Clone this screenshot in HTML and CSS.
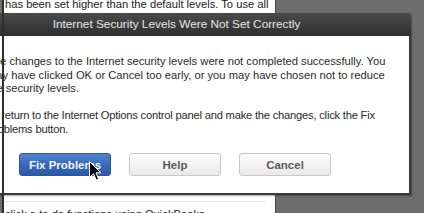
FILE: index.html
```html
<!DOCTYPE html>
<html>
<head>
<meta charset="utf-8">
<link rel="stylesheet" href="styles.css">
</head>
<body>
<div class="desktop">
  <div class="bgwin">
    <div class="bg-top">
      <p class="bg-line">has been set higher than the default levels. To use all</p>
      <p class="bg-line">security features, reset the security levels to their default</p>
    </div>
    <div class="bg-bottom">
      <div class="bg-rule"></div>
      <p class="bg-line">click a to do functions using QuickBooks</p>
    </div>
  </div>
  <div class="edge-line"></div>
  <div class="dialog">
    <div class="titlebar">Internet Security Levels Were Not Set Correctly</div>
    <div class="dialog-body">
      <p class="msg">The changes to the Internet security levels were not completed successfully. You may have clicked OK or Cancel too early, or you may have chosen not to reduce the security levels.</p>
      <p class="msg msg-tight">To return to the Internet Options control panel and make the changes, click the Fix Problems button.</p>
      <div class="buttons">
        <button class="btn btn-primary">Fix Problems</button>
        <button class="btn">Help</button>
        <button class="btn">Cancel</button>
      </div>
    </div>
  </div>
  <svg class="cursor" width="13" height="20" viewBox="0 0 13 20">
    <path d="M0.5 0.5 V16.5 L4.5 12.8 L7.2 19 L9.6 18 L7 11.8 H12 Z" fill="#000" stroke="#fff" stroke-width="1" stroke-linejoin="miter"/>
  </svg>
</div>
</body>
</html>
```

FILE: styles.css
```css
html, body {
  margin: 0;
  padding: 0;
}
body {
  width: 424px;
  height: 213px;
  overflow: hidden;
  background: #6e6e6e;
  font-family: "Liberation Sans", Arial, sans-serif;
}
.desktop {
  position: relative;
  width: 424px;
  height: 213px;
  overflow: hidden;
}
.bgwin {
  position: absolute;
  left: 3px;
  top: -10px;
  width: 272px;
  height: 240px;
  background: #fff;
  border-right: 1px solid #4a4a4a;
  display: flex;
  flex-direction: column;
  justify-content: space-between;
}
.bg-top {
  padding: 7px 0 0 2px;
}
.bg-bottom {
  padding: 0 0 0 2px;
  height: 35px;
}
.bg-line {
  margin: 0;
  font-size: 11.2px;
  line-height: 14px;
  color: #222;
  white-space: nowrap;
}
.bg-rule {
  height: 1px;
  background: #e2e2e2;
  margin: 6px 10px 5px 0;
}
.edge-line {
  position: absolute;
  left: 2px;
  top: 0;
  width: 2px;
  height: 213px;
  background: #2e2e2e;
  z-index: 3;
}
.dialog {
  position: absolute;
  left: -58px;
  top: 13px;
  width: 469px;
  z-index: 2;
  box-shadow: 1px 1px 2px rgba(0,0,0,0.35);
  border-radius: 3px 3px 0 0;
}
.titlebar {
  height: 23px;
  line-height: 23px;
  text-align: center;
  color: #e6e6e6;
  font-size: 11.8px;
  background: linear-gradient(#4a4a4a, #2f2f2f);
  border-radius: 3px 3px 0 0;
}
.dialog-body {
  background: #fff;
  border: 2px solid #3a3a3a;
  border-top: 0;
  padding: 19px 18px 17px 43px;
}
.msg {
  margin: 0 0 13.5px 0;
  font-size: 11.2px;
  line-height: 13.5px;
  color: #2a2a2a;
}
.msg-tight {
  letter-spacing: -0.22px;
  margin-bottom: 17px;
}
.buttons {
  display: flex;
  gap: 18px;
  margin-left: 32px;
}
.btn {
  width: 92px;
  height: 23px;
  padding: 0;
  border: 1px solid #c9c9c9;
  border-radius: 3px;
  background: linear-gradient(#fdfdfd, #e9e9e9);
  font-family: "Liberation Sans", Arial, sans-serif;
  font-size: 11.5px;
  font-weight: bold;
  color: #5a5a5a;
}
.btn-primary {
  border-color: #2a55a0;
  background: linear-gradient(#4f82cf, #3565b5 60%, #2c5aa8);
  color: #f2f5fb;
}
.cursor {
  position: absolute;
  left: 89px;
  top: 161px;
  z-index: 5;
}
```
